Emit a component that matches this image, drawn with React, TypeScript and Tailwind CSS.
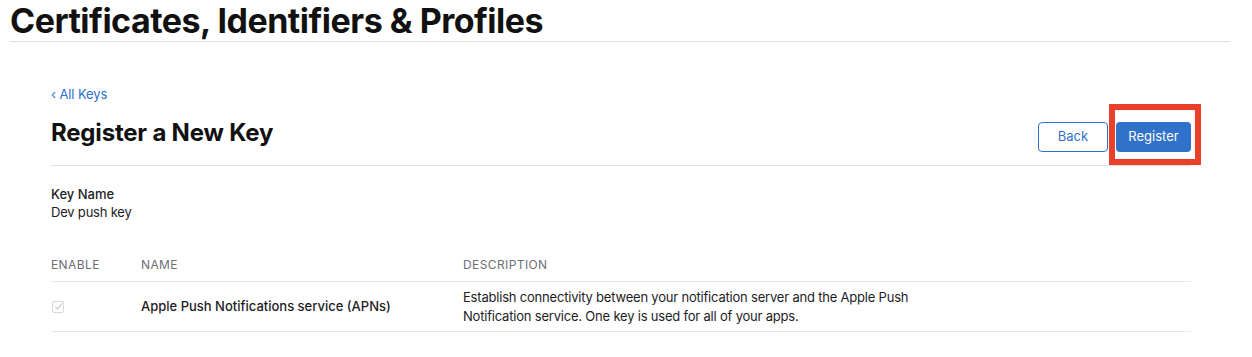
import React from "react";

export default function App() {
  const font = { fontFamily: "Inter, 'Noto Sans', sans-serif" };
  return (
    <div className="w-[1252px] h-[357px] bg-white text-[#1d1d1f] overflow-hidden" style={font}>
      <div className="pl-[10px] pr-[22px]">
        <h1 className="text-[34px] font-bold leading-[40px] pt-[1px] tracking-[-0.5px] text-[#111]">
          Certificates, Identifiers &amp; Profiles
        </h1>
        <div className="h-px bg-[#e0e0e0]" />
      </div>

      <div className="pl-[51px] pr-[61px]">
        <div className="mt-[43px] text-[13px] leading-[18px] tracking-[-0.1px] text-[#2d6fce]">‹ All Keys</div>

        <div className="mt-[19px] flex items-start justify-between h-[30px]">
          <h2 className="text-[24px] font-bold leading-[22px] tracking-[-0.2px] text-[#111]">Register a New Key</h2>
          <div className="flex items-center gap-[8px]">
            <button className="h-[30px] w-[70px] rounded-[4px] border border-[#3071c9] text-[#3071c9] text-[13px] bg-white">
              Back
            </button>
            <span className="relative">
              <button className="h-[30px] w-[75px] rounded-[4px] bg-[#3071c9] text-white text-[13px]">
                Register
              </button>
              <span className="pointer-events-none absolute left-[-7px] right-[-10px] top-[-18px] bottom-[-13px] border-[6px] border-[#e8402a]" />
            </span>
          </div>
        </div>

        <div className="mt-[13px] h-px bg-[#e0e0e0]" />

        <div className="mt-[19px] text-[13px] leading-[18px] font-medium text-[#1d1d1f]">Key Name</div>
        <div className="text-[13px] leading-[18px] tracking-[-0.2px] text-[#1d1d1f]">Dev push key</div>

        <div className="mt-[36px] flex text-[12px] leading-[16px] tracking-[0.4px] text-[#6e6e73] uppercase pb-[8px]">
          <div className="w-[90px]">Enable</div>
          <div className="w-[322px]">Name</div>
          <div>Description</div>
        </div>
        <div className="h-px bg-[#e8e8e8]" />
        <div className="flex items-center h-[49px] text-[13px] leading-[19px]">
          <div className="w-[90px] pl-[1px]">
            <span className="flex items-center justify-center w-[12px] h-[12px] rounded-[2px] border border-[#d8d8d8] bg-white">
              <svg width="9" height="9" viewBox="0 0 10 10">
                <path d="M1.5 5.2 L4 7.7 L8.7 1.8" fill="none" stroke="#c8c8c8" strokeWidth="1.3" />
              </svg>
            </span>
          </div>
          <div className="w-[322px] font-medium">Apple Push Notifications service (APNs)</div>
          <div className="w-[480px] tracking-[-0.2px]">
            Establish connectivity between your notification server and the Apple Push
            <br />
            Notification service. One key is used for all of your apps.
          </div>
        </div>
        <div className="h-px bg-[#e8e8e8]" />
      </div>
    </div>
  );
}
